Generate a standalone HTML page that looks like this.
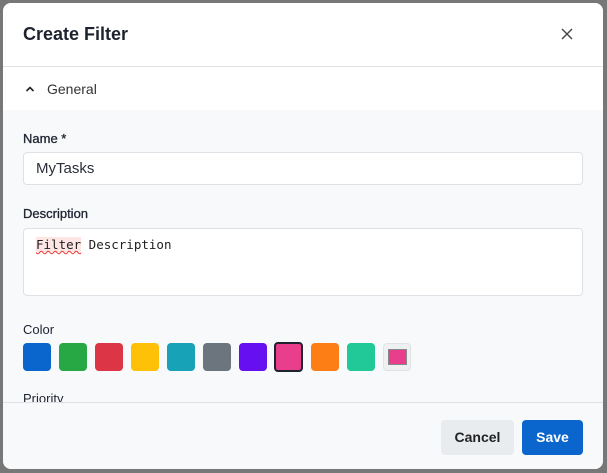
<!DOCTYPE html>
<html><head><style>
*{box-sizing:border-box;margin:0;padding:0}
body{width:607px;height:473px;background:#777;font-family:"Liberation Sans",sans-serif;position:relative;overflow:hidden;color:#1f2330}
.dlg{position:absolute;left:3px;top:3px;width:600px;height:466px;background:#f8f9fa;border-radius:8px;overflow:hidden}
.hdr{position:absolute;left:0;top:0;width:600px;height:64px;background:#fff;border-bottom:1px solid #dee2e6}
.title{position:absolute;left:20px;top:21px;font-size:18px;font-weight:bold;color:#1f2330}
.gen{position:absolute;left:0;top:64px;width:600px;height:43px;background:#fff}
.gen span{position:absolute;left:44px;top:14px;font-size:14px;color:#333}
.lbl{position:absolute;left:20px;font-size:13px;color:#1f2330;-webkit-text-stroke:0.3px #1f2330}
.inp{position:absolute;left:20px;width:560px;background:#fff;border:1px solid #dee2e6;border-radius:4px}
.sw{position:absolute;top:340px;width:28px;height:28px;border-radius:4px}
.foot{position:absolute;left:0;top:399px;width:600px;height:67px;border-top:1px solid #dee2e6;background:#f8f9fa}
.btn{position:absolute;top:17px;height:35px;border-radius:4px;font-size:14px;font-weight:bold;text-align:center;line-height:35px}
</style></head><body>
<div class="dlg">
<div class="hdr"><div class="title">Create Filter</div>
<svg style="position:absolute;left:557px;top:24px" width="14" height="14" viewBox="0 0 14 14"><path d="M2 2L12 12M12 2L2 12" stroke="#444" stroke-width="1.4"/></svg></div>
<div class="gen"><svg style="position:absolute;left:22px;top:18px" width="10" height="8" viewBox="0 0 10 8"><path d="M1.5 6L5 2.5L8.5 6" stroke="#222" stroke-width="1.6" fill="none"/></svg><span>General</span></div>
<div class="lbl" style="top:128px">Name *</div>
<div class="inp" style="top:149px;height:33px"><span style="position:absolute;left:12px;top:7px;font-size:15px;color:#2a2f3a">MyTasks</span></div>
<div class="lbl" style="top:203px">Description</div>
<div class="inp" style="top:225px;height:68px"><span style="position:absolute;left:12px;top:8px;font-family:'DejaVu Sans Mono',monospace;font-size:12.5px;color:#222"><span style="background:#fde6e3;text-decoration:underline wavy #e33;text-decoration-thickness:1px">Filter</span> Description</span></div>
<div class="lbl" style="top:319px;-webkit-text-stroke:0">Color</div>
<div class="sw" style="left:20px;background:#0a66cc"></div>
<div class="sw" style="left:56px;background:#28a745"></div>
<div class="sw" style="left:92px;background:#dc3545"></div>
<div class="sw" style="left:128px;background:#ffc107"></div>
<div class="sw" style="left:164px;background:#17a2b8"></div>
<div class="sw" style="left:200px;background:#6c757d"></div>
<div class="sw" style="left:236px;background:#6610f2"></div>
<div class="sw" style="left:271px;top:339px;width:29px;height:30px;background:#e83e8c;border:2px solid #1f2330"></div>
<div class="sw" style="left:308px;background:#fd7e14"></div>
<div class="sw" style="left:344px;background:#20c997"></div>
<div class="sw" style="left:380px;background:#eef0f2;border:1px solid #e0e2e5"><div style="position:absolute;left:4px;top:5px;width:19px;height:16px;background:#e83e8c;border:1px solid #888"></div></div>
<div class="lbl" style="top:388px;-webkit-text-stroke:0">Priority</div>
<div class="foot">
<div class="btn" style="left:438px;width:73px;background:#e9ecef;color:#222">Cancel</div>
<div class="btn" style="left:519px;width:61px;background:#0a66cc;color:#fff">Save</div>
</div>
</div>
</body></html>
